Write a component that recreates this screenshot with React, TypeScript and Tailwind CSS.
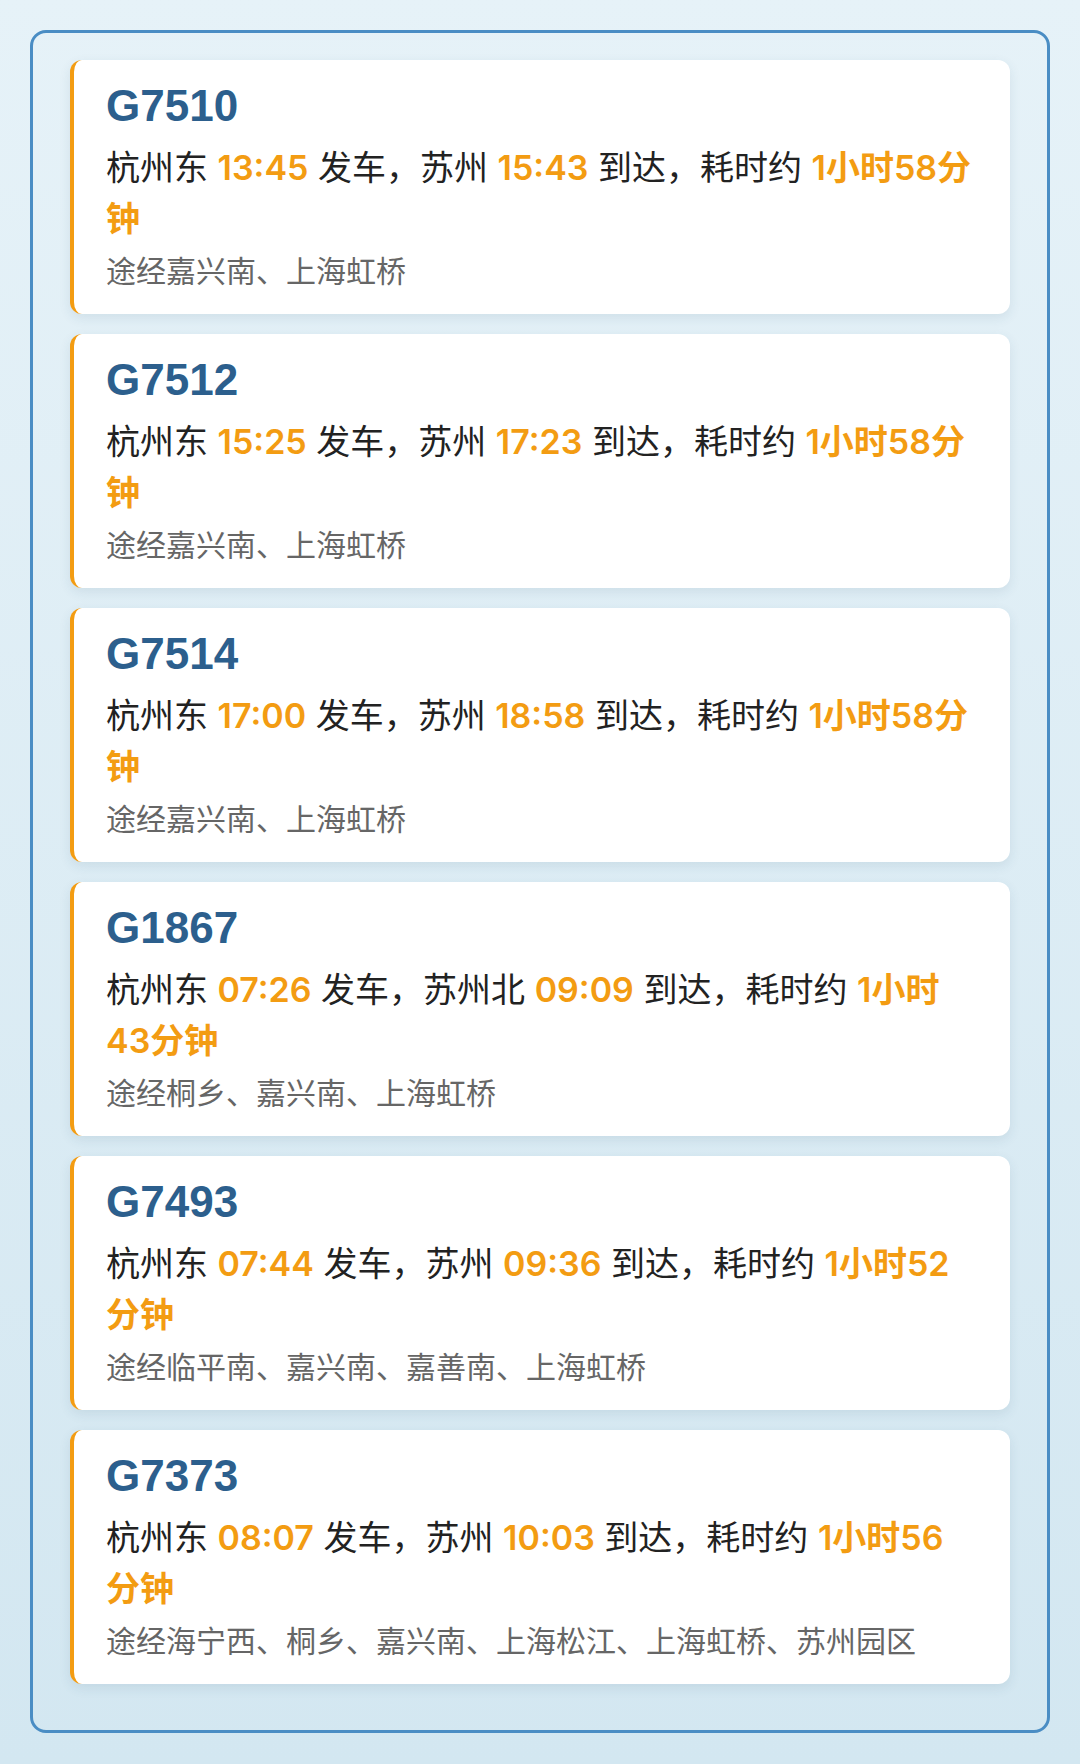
import React from "react";

const trains = [
    { no: "G7510", from: "杭州东", dep: "13:45", to: "苏州", arr: "15:43", dur: ["1小时58分", "钟"], via: "途经嘉兴南、上海虹桥" },
    { no: "G7512", from: "杭州东", dep: "15:25", to: "苏州", arr: "17:23", dur: ["1小时58分", "钟"], via: "途经嘉兴南、上海虹桥" },
    { no: "G7514", from: "杭州东", dep: "17:00", to: "苏州", arr: "18:58", dur: ["1小时58分", "钟"], via: "途经嘉兴南、上海虹桥" },
    { no: "G1867", from: "杭州东", dep: "07:26", to: "苏州北", arr: "09:09", dur: ["1小时", "43分钟"], via: "途经桐乡、嘉兴南、上海虹桥" },
    { no: "G7493", from: "杭州东", dep: "07:44", to: "苏州", arr: "09:36", dur: ["1小时52", "分钟"], via: "途经临平南、嘉兴南、嘉善南、上海虹桥" },
    { no: "G7373", from: "杭州东", dep: "08:07", to: "苏州", arr: "10:03", dur: ["1小时56", "分钟"], via: "途经海宁西、桐乡、嘉兴南、上海松江、上海虹桥、苏州园区" },
];

export default function App() {
    return (
        <div className="min-h-[1764px] bg-gradient-to-b from-[#e6f2f8] to-[#d3e7f1] px-[30px] pt-[30px] pb-[31px] font-['Liberation_Sans','Noto_Sans_CJK_SC',sans-serif]">
            <div className="rounded-[16px] border-[3px] border-[#4a8dc4] px-[37px] pt-[27px] pb-[46px]">
                <div className="flex flex-col gap-5">
                    {trains.map((t) => (
                        <div
                            key={t.no}
                            className="rounded-[12px] border-l-4 border-[#f39c12] bg-white px-8 pt-5 pb-5 shadow-[0_4px_12px_rgba(40,80,110,0.10)]"
                        >
                            <div className="text-[44px] leading-[52px] font-bold text-[#2c5f8d]">{t.no}</div>
                            <div className="mt-[10px] font-['Inter','Noto_Sans_CJK_SC',sans-serif] text-[34px] leading-[51px] text-[#222]">
                                {t.from} <span className="font-semibold text-[#f39c12]">{t.dep}</span> 发车，{t.to}{" "}
                                <span className="font-semibold text-[#f39c12]">{t.arr}</span> 到达，耗时约{" "}
                                <span className="font-semibold text-[#f39c12]">
                                    {t.dur[0]}
                                    <br />
                                    {t.dur[1]}
                                </span>
                            </div>
                            <div className="mt-[5px] text-[30px] leading-[45px] text-[#666]">{t.via}</div>
                        </div>
                    ))}
                </div>
            </div>
        </div>
    );
}
